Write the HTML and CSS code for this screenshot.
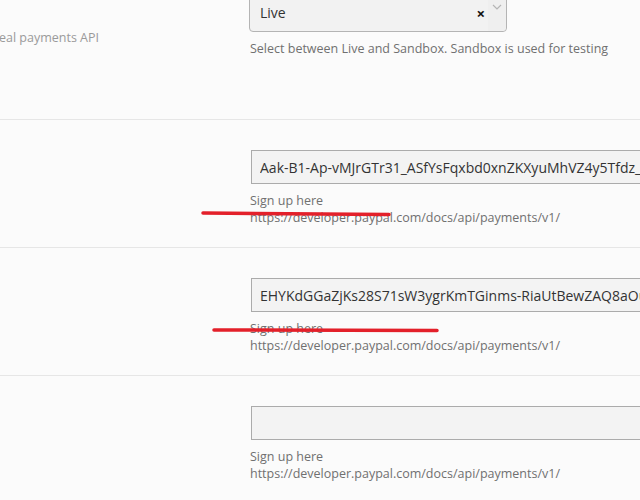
FILE: index.html
```html
<!DOCTYPE html>
<html lang="en">
<head>
  <meta charset="UTF-8">
  <title>PayPal Settings</title>
  <link rel="stylesheet" href="styles.css">
</head>
<body>

  <div class="page">
    <div class="form">

      <div class="row row-mode">
        <div class="label-col">
          <div class="label-desc">Use the sandbox or the real payments API</div>
        </div>
        <div class="field-col">
          <div class="select">
            <span class="select-value">Live</span>
            <span class="select-clear">×</span>
            <span class="select-arrow">
              <svg width="10" height="6" viewBox="0 0 10 6"><path d="M1 1 L5 5 L9 1" fill="none" stroke="#b5b5b5" stroke-width="1.2"/></svg>
            </span>
          </div>
          <div class="help">Select between Live and Sandbox. Sandbox is used for testing</div>
        </div>
      </div>

      <div class="row">
        <div class="label-col"></div>
        <div class="field-col">
          <input class="text-input" type="text" value="Aak-B1-Ap-vMJrGTr31_ASfYsFqxbd0xnZKXyuMhVZ4y5Tfdz_2xQk">
          <div class="help">
            Sign up here<br>
            https://developer.paypal.com/docs/api/payments/v1/
          </div>
        </div>
      </div>

      <div class="row">
        <div class="label-col"></div>
        <div class="field-col">
          <input class="text-input" type="text" value="EHYKdGGaZjKs28S71sW3ygrKmTGinms-RiaUtBewZAQ8aOupL3">
          <div class="help">
            Sign up here<br>
            https://developer.paypal.com/docs/api/payments/v1/
          </div>
        </div>
      </div>

      <div class="row row-last">
        <div class="label-col"></div>
        <div class="field-col">
          <input class="text-input" type="text" value="">
          <div class="help">
            Sign up here<br>
            https://developer.paypal.com/docs/api/payments/v1/
          </div>
        </div>
      </div>

    </div>

    <!-- red marker strokes drawn over the screenshot -->
    <svg class="marks" width="640" height="500" viewBox="0 0 640 500">
      <line x1="203" y1="213" x2="389" y2="214.5" stroke="#e3202a" stroke-width="3.5" stroke-linecap="round"/>
      <line x1="214" y1="330" x2="437" y2="330.5" stroke="#e3202a" stroke-width="3.5" stroke-linecap="round"/>
    </svg>
  </div>

</body>
</html>
```

FILE: styles.css
```css
html, body {
  margin: 0;
  overflow: hidden;
}

body {
  font-family: "Open Sans", "Noto Sans", sans-serif;
  background: #fbfbfb;
  color: #444;
}

.page {
  position: relative;
  width: 640px;
  height: 500px;
  overflow: hidden;
}

.form {
  margin-top: -36px;
}

.row {
  display: flex;
  padding: 30px 0 21px;
  border-bottom: 1px solid #e6e6e6;
}

.row-mode {
  padding-bottom: 62px;
}

.row-last {
  border-bottom: none;
}

.label-col {
  width: 250px;
  flex-shrink: 0;
  box-sizing: border-box;
  padding-right: 151px;
  display: flex;
  flex-direction: column;
  align-items: flex-end;
}

.label-desc {
  white-space: nowrap;
  margin-top: 35px;
  font-size: 12.5px;
  line-height: 17px;
  color: #9a9a9a;
}

.field-col {
  width: 440px;
  flex-shrink: 0;
}

.select {
  display: flex;
  width: 258px;
  height: 38px;
  margin: 0 0 8px -1px;
  box-sizing: border-box;
  border: 1px solid #b4b4b4;
  border-radius: 4px;
  background: #f2f2f2;
}

.select-value {
  flex: 1;
  padding-left: 10px;
  font-size: 14px;
  line-height: 36px;
  color: #333;
}

.select-clear {
  font-size: 15px;
  font-weight: bold;
  line-height: 36px;
  color: #111;
  padding-right: 3px;
}

.select-arrow {
  width: 18px;
  padding-top: 9px;
  display: flex;
  justify-content: center;
  align-items: flex-start;
  background: #efefef;
  border-radius: 0 4px 4px 0;
}

.text-input {
  display: block;
  width: 100%;
  height: 34px;
  margin: 0 0 8px 1px;
  box-sizing: border-box;
  padding: 0 8px;
  border: 1px solid #ababab;
  border-radius: 0;
  background: #f3f3f3;
  font-family: inherit;
  font-size: 14px;
  color: #333;
  outline: none;
}

.help {
  font-size: 12.5px;
  line-height: 17px;
  color: #707070;
  white-space: nowrap;
}

.marks {
  position: absolute;
  left: 0;
  top: 0;
  pointer-events: none;
}
```
